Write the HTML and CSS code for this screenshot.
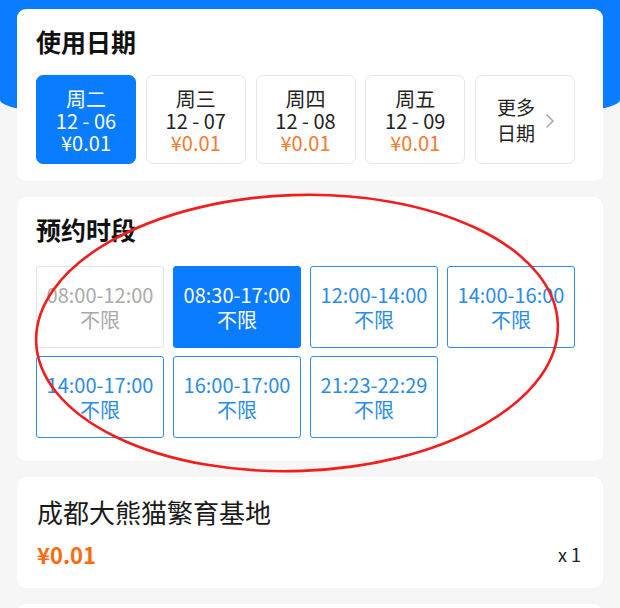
FILE: index.html
```html
<!DOCTYPE html>
<html lang="zh">
<head>
<meta charset="utf-8">
<title>预约</title>
<link rel="stylesheet" href="styles.css">
</head>
<body>
<div class="page">
  <div class="hero"></div>
  <div class="content">
    <section class="card date-card">
      <h2 class="card-title">使用日期</h2>
      <div class="dates">
        <div class="date active"><span>周二</span><span>12 - 06</span><span class="price">¥0.01</span></div>
        <div class="date"><span>周三</span><span>12 - 07</span><span class="price">¥0.01</span></div>
        <div class="date"><span>周四</span><span>12 - 08</span><span class="price">¥0.01</span></div>
        <div class="date"><span>周五</span><span>12 - 09</span><span class="price">¥0.01</span></div>
        <div class="date more">
          <div class="more-text"><span>更多</span><span>日期</span></div>
          <svg class="chev" width="10" height="16" viewBox="0 0 10 16"><path d="M2 2 L8 8 L2 14" fill="none" stroke="#a8a8a8" stroke-width="1.6" stroke-linecap="round" stroke-linejoin="round"/></svg>
        </div>
      </div>
    </section>

    <section class="card slot-card">
      <h2 class="card-title">预约时段</h2>
      <div class="slots">
        <div class="slot disabled"><span>08:00-12:00</span><span>不限</span></div>
        <div class="slot active"><span>08:30-17:00</span><span>不限</span></div>
        <div class="slot"><span>12:00-14:00</span><span>不限</span></div>
        <div class="slot"><span>14:00-16:00</span><span>不限</span></div>
        <div class="slot"><span>14:00-17:00</span><span>不限</span></div>
        <div class="slot"><span>16:00-17:00</span><span>不限</span></div>
        <div class="slot"><span>21:23-22:29</span><span>不限</span></div>
      </div>
    </section>

    <section class="card product-card">
      <div class="product-name">成都大熊猫繁育基地</div>
      <div class="product-row">
        <span class="product-price">¥0.01</span>
        <span class="qty">x 1</span>
      </div>
    </section>

    <section class="card next-card"></section>
  </div>
  <svg class="annotation" width="620" height="608" viewBox="0 0 620 608">
    <ellipse cx="297" cy="333" rx="261" ry="138" transform="rotate(-2 297 333)" fill="none" stroke="#f21d1d" stroke-width="2.6"/>
  </svg>
</div>
</body>
</html>
```

FILE: styles.css
```css
* { box-sizing: border-box; }
html, body { margin: 0; padding: 0; }
body {
  background: #f6f6f6;
  font-family: "Noto Sans CJK SC", "Noto Sans", sans-serif;
  color: #222;
  width: 620px;
  height: 608px;
  overflow: hidden;
}
.page { position: relative; width: 620px; height: 608px; overflow: hidden; }
.hero {
  position: absolute;
  left: 0; top: 0;
  width: 620px; height: 125px;
  background: #0a7cff;
  border-radius: 0 0 50% 50% / 0 0 25px 25px;
}
.content {
  position: relative;
  display: flex;
  flex-direction: column;
  gap: 16px;
  padding: 9px 17px 0;
}
.card {
  background: #fff;
  border-radius: 9px;
}
.card-title {
  margin: 0;
  font-size: 25px;
  line-height: 30px;
  font-weight: 700;
  color: #111;
}
.date-card { padding: 17px 19px 17px; }
.dates {
  display: flex;
  gap: 9.75px;
  margin-top: 19px;
}
.date {
  width: 100px;
  height: 89px;
  border: 1px solid #e6e6e6;
  border-radius: 7px;
  display: flex;
  flex-direction: column;
  align-items: center;
  justify-content: center;
  font-size: 20px;
  line-height: 22px;
  color: #222;
  padding-top: 3px;
}
.date .price { color: #f47a2c; }
.date.active { background: #0a7cff; border-color: #0a7cff; color: #fff; }
.date.active .price { color: #fff; }
.date.more { flex-direction: row; gap: 10px; padding-top: 0; padding-left: 2px; }
.more-text { display: flex; flex-direction: column; line-height: 26px; font-size: 19px; }
.chev { margin-top: 2px; }

.slot-card { padding: 17px 19px 23px; }
.slots {
  margin-top: 22px;
  display: grid;
  grid-template-columns: repeat(4, 128px);
  column-gap: 9px;
  row-gap: 8px;
}
.slot {
  height: 82px;
  border: 1.5px solid #2e8ff0;
  border-radius: 3px;
  color: #2b8be8;
  display: flex;
  flex-direction: column;
  align-items: center;
  justify-content: center;
  font-size: 20px;
  line-height: 25px;
}
.slot.disabled { border-color: #e4e4e4; color: #aaaaaa; }
.slot.active { background: #0a7cff; border-color: #0a7cff; color: #fff; }

.product-card { padding: 20px 20px 18px; height: 111px; }
.product-name { font-size: 26px; line-height: 30px; color: #1a1a1a; }
.product-row {
  display: flex;
  justify-content: space-between;
  align-items: center;
  margin-top: 13px;
}
.product-price { color: #ff6a0a; font-size: 22px; font-weight: 700; line-height: 28px; }
.qty { font-size: 18px; color: #222; margin-right: 2px; }
.next-card { height: 40px; }

.annotation {
  position: absolute;
  left: 0; top: 0;
  pointer-events: none;
}
```
